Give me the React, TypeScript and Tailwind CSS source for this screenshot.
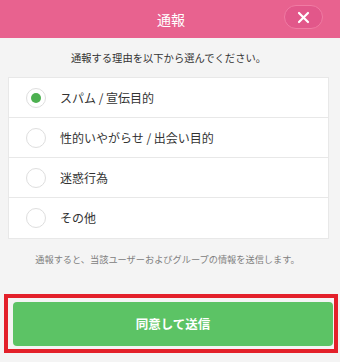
import { useState } from 'react';

const reasons = ['スパム / 宣伝目的', '性的いやがらせ / 出会い目的', '迷惑行為', 'その他'];

export default function App() {
  const [selected, setSelected] = useState(0);

  return (
    <div
      className="w-[340px] h-[362px] bg-[#f4f4f4] overflow-hidden"
      style={{ fontFamily: '"Noto Sans CJK JP", "Noto Sans", sans-serif' }}
    >
      {/* ヘッダー */}
      <div className="relative h-[38px] bg-[#e8628f] flex items-center justify-center">
        <span className="text-white text-[14px] leading-none pl-[2px]">通報</span>
        <button className="absolute right-[17px] top-[5px] w-[39px] h-[24px] rounded-full bg-[#e2578a] border border-[#f07ba3] flex items-center justify-center">
          <svg width="13" height="13" viewBox="0 0 13 13">
            <path d="M2 2 L11 11 M11 2 L2 11" stroke="white" strokeWidth="2.2" strokeLinecap="round" />
          </svg>
        </button>
      </div>

      <div className="pl-[8px] pr-[11px]">
        <div className="h-[39px] flex items-center justify-center text-[10.3px] text-[#333]">
          通報する理由を以下から選んでください。
        </div>

        {/* 理由リスト */}
        <div className="bg-white border border-[#e8e8e8]">
          {reasons.map((r, i) => (
            <div
              key={r}
              onClick={() => setSelected(i)}
              className={`h-[40px] flex items-center pl-[17px] cursor-pointer ${
                i < reasons.length - 1 ? 'border-b border-[#e8e8e8]' : ''
              }`}
            >
              <span className="w-[20px] h-[20px] rounded-full border border-[#dedede] bg-white flex items-center justify-center">
                {selected === i && <span className="w-[10px] h-[10px] rounded-full bg-[#4cb050]" />}
              </span>
              <span className="ml-[14px] text-[12px] text-[#333]">{r}</span>
            </div>
          ))}
        </div>

        <div className="h-[42px] flex items-center justify-center text-[9.2px] text-[#808080] pr-[2px]">
          通報すると、当該ユーザーおよびグループの情報を送信します。
        </div>
      </div>

      {/* 送信ボタン */}
      <div className="relative mt-[13px] h-[59px] pl-[13px] pr-[7px] pt-[8px]">
        <button className="w-full h-[44px] rounded-[4px] bg-[#5cc365] text-white text-[12.5px] font-bold">
          同意して送信
        </button>
        <div className="absolute left-[4px] right-[2px] top-0 bottom-0 border-[4px] border-[#e3202a] pointer-events-none" />
      </div>
    </div>
  );
}
